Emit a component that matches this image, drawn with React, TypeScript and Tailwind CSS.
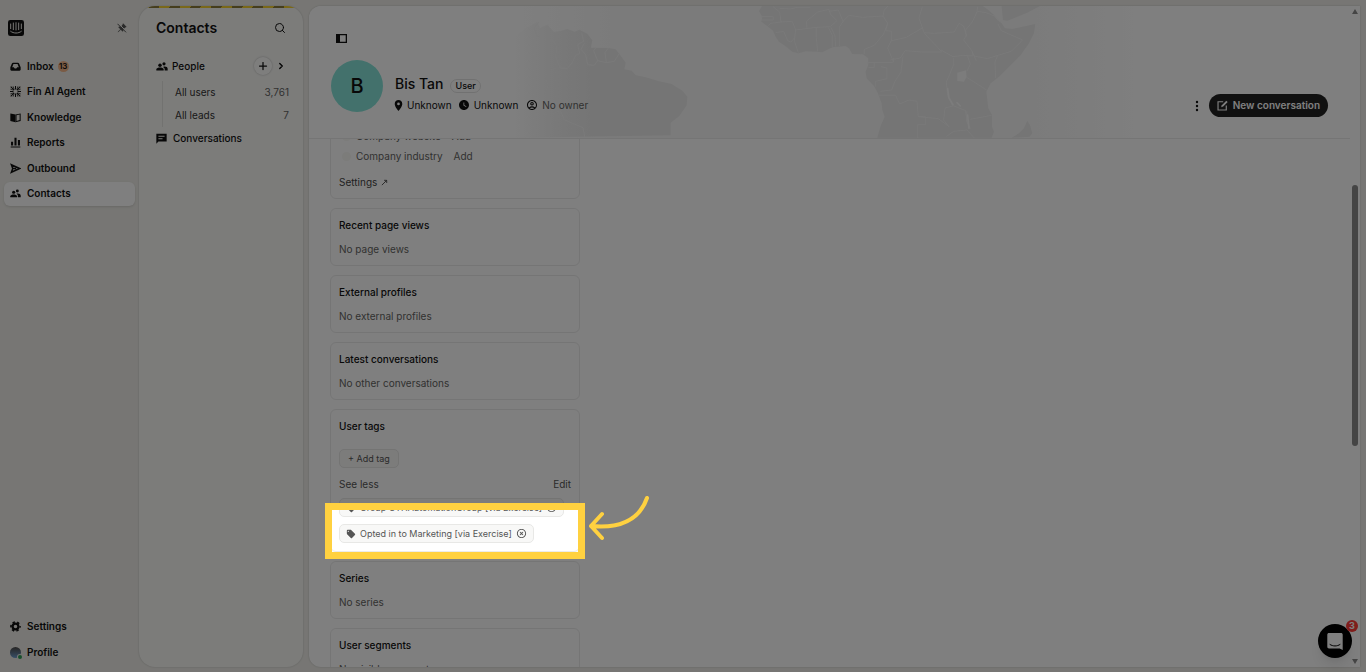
import React from 'react';
import { MdLocationOn, MdWatchLater, MdOutlineAccountCircle, MdLocalOffer, MdHighlightOff } from 'react-icons/md';
import { BsPinAngleFill } from 'react-icons/bs';
import { ChevronRight, Plus, Search } from 'lucide-react';

type IconProps = { className?: string };

function Logo() {
  return (
    <svg viewBox="0 0 48 48" className="w-4 h-4">
      <rect width="48" height="48" rx="7" fill="#111" />
      <g stroke="#eeede8" strokeWidth="3" strokeLinecap="round" fill="none">
        <path d="M8 12v14M16 9v20M24 8v22M32 9v20M40 12v14" />
        <path d="M8 34c9 7 23 7 32 0" />
      </g>
    </svg>
  );
}

function InboxIcon({ className }: IconProps) {
  return (
    <svg viewBox="0 0 16 16" className={className} fill="currentColor">
      <path fillRule="evenodd" d="M4.5 2.5h7c.8 0 1.4.4 1.700 1.100L15.500 9v3.500c0 .8-.7 1.500-1.500 1.500H2c-.8 0-1.500-.7-1.500-1.500V9l2.300-5.400c.3-.7.9-1.100 1.700-1.100zM5 4.500 3.200 9H5.700c.2 1.200 1.100 2 2.300 2s2.100-.8 2.300-2h2.500L11 4.500z" />
    </svg>
  );
}

function FinIcon({ className }: IconProps) {
  return (
    <svg viewBox="0 0 16 16" className={className} fill="none" stroke="currentColor" strokeWidth="1.500">
      <path d="M8 0v5M8 11v5M0 8h5M11 8h5" />
      <path d="M1 1l5 5M15 1l-5 5M1 15l5-5M15 15l-5-5" />
      <path d="M4.500 .5 6 5M11.500 .5 10 5M4.500 15.500 6 11M11.500 15.500 10 11M.5 4.500 5 6M.5 11.500 5 10M15.500 4.500 11 6M15.500 11.500 11 10" strokeWidth="1" />
    </svg>
  );
}

function BookIcon({ className }: IconProps) {
  return (
    <svg viewBox="0 0 16 16" className={className} fill="currentColor">
      <path d="M.5 2 8 3.500V15L.5 13z" />
      <path fillRule="evenodd" d="M8 3.500 15.500 2v11L8 15zM9.500 4.800v8.200l4.500-1.200V3.800z" />
    </svg>
  );
}

function ReportsIcon({ className }: IconProps) {
  return (
    <svg viewBox="0 0 16 16" className={className} fill="currentColor">
      <path d="M1.500 7h3v5.500h-3zM6.500 1h3v11.500h-3zM11.500 4.500h3v8h-3zM1 13.700h14v1.500H1z" />
    </svg>
  );
}

function OutboundIcon({ className }: IconProps) {
  return (
    <svg viewBox="0 0 16 16" className={className} fill="none" stroke="currentColor" strokeWidth="2.200" strokeLinejoin="miter">
      <path d="M2 2.500 14 8 2 13.500 4 8zM4 8h5" />
    </svg>
  );
}

function PeopleIcon({ className }: IconProps) {
  return (
    <svg viewBox="0 0 18 16" className={className} fill="currentColor">
      <circle cx="6" cy="6" r="2.600" />
      <path d="M.5 14v-1.500c0-2 3-3 5.500-3s5.500 1 5.500 3V14z" />
      <circle cx="12" cy="4" r="2.400" />
      <path d="M11.500 8.200c3-.7 6 .8 6 3V14H13v-1.800c0-1.700-.8-2.800-2.500-3.600z" />
    </svg>
  );
}

function ChatIcon({ className }: IconProps) {
  return (
    <svg viewBox="0 0 16 16" className={className} fill="currentColor">
      <path fillRule="evenodd" d="M.5 1h15v11.500H3.500L.5 15.500zM3.500 4v1.500h9V4zM3.500 7.500V9h6V7.500z" />
    </svg>
  );
}

function GearIcon({ className }: IconProps) {
  return (
    <svg viewBox="0 0 16 16" className={className} fill="none" stroke="currentColor">
      <circle cx="8" cy="8" r="4.200" strokeWidth="3.200" />
      <circle cx="8" cy="8" r="6.600" strokeWidth="2.400" strokeDasharray="3.460 3.450" strokeDashoffset="1.730" />
    </svg>
  );
}

function ComposeIcon({ className }: IconProps) {
  return (
    <svg viewBox="0 0 16 16" className={className} fill="none" stroke="currentColor" strokeWidth="1.700">
      <path d="M9 2.500H1.500v12h12V8" />
      <path d="M6 10.500 7 7.500 13.500 1l2 2L9 9.500z" fill="currentColor" stroke="none" />
    </svg>
  );
}

function WorldMap() {
  return (
    <svg viewBox="510 6 640 132" className="absolute left-[200px] top-0 w-[640px] h-[132px]">
      <defs>
        <linearGradient id="sea">
          <stop offset="0" stopColor="#f6f6f6" stopOpacity="0" />
          <stop offset="0.18" stopColor="#f6f6f6" />
          <stop offset="0.8" stopColor="#f6f6f6" />
          <stop offset="1" stopColor="#f6f6f6" stopOpacity="0" />
        </linearGradient>
        <linearGradient id="coast" gradientUnits="userSpaceOnUse" x1="620" x2="860" y1="0" y2="0">
          <stop offset="0" stopColor="#eaeaea" stopOpacity="0" />
          <stop offset="1" stopColor="#eaeaea" />
        </linearGradient>
      </defs>
      <rect x="510" y="6" width="640" height="132" fill="url(#sea)" />
      <g transform="translate(310 0) scale(0.3333)">
        <path fill="url(#coast)" d="M620 413V110l30-25 35-19 8 18 22-10 20 22 22-4 18-5 22 8 14-6 24 12 15 20-4 22 54 1 20 4 14 18 16 22-4 20 22 4 12 14 30 6 40 12 38 8 32 20 15 18-2 26-22 32-26 20v38z" />
        <g fill="none" stroke="#f5f5f5" strokeWidth="2.500">
          <path d="M690 66l-14 18 6 22 26 14 28 4 8 20-4 26 14 34 20 2 16-18 10-22 12-6-6-26 18-10-6-26" />
          <path d="M826 130l-10 18 14 16 6 30 20 2 10-14-12-30 8-10M866 182l26 6-4-30 10-14M892 188l24-4 14-22" />
          <path d="M740 205l-22 6-8 24 8 20-10 30M700 345l32-4 22-10 12 28 32 14 24 10 6 30M722 413l4-60" />
        </g>
      </g>
      <g transform="translate(700 0) scale(0.3333)">
        <g fill="#eaeaea">
          <path d="M190 17l-10 16 10 17-3 15 18 13 17 14 8 18 10 15 22 15 18 15 18 5 22-6 35 1 15 2 30-15 40-4 10 7 10 17 32 1 16 12v20l-8 20 3 20 22 23 12 22 11 30 2 20 7 20-12 28-10 35h343l7-18-6-15v-35l-11-20-3-25-3-25 13-25 25-20 30-30 35-35 25-35 15-30 4-28-24 5-45 10-22-2-10-15-13-10-10-15-17-15-18-13z" />
          <path d="M908 17l4 43 13 2 60-24 40-21zM938 413l22-13 15-15 10-22 8 12 7 25-8 10z" />
        </g>
        <g fill="none" stroke="#f4f4f4" strokeWidth="2.500" strokeLinejoin="round">
          <path d="M222 20l20 16 4 30 34-2 10 26 62-8 42-2 20-18-20-20-4-14-34 8-34 28 2 20M242 25l32 2 20-5h40M187 50h36v10h-36M246 66l-30 4-10 8" />
          <path d="M230 98l24-4 12 28 10 4 12-14M290 90l-4 32 12 36M352 82v30l4 42M388 82l12 24v36M396 82l12 26 2 32M434 62l-12 18v58M390 34l28-4 14 34 18-18 40 6 62-4 4-18 12-13" />
          <path d="M552 48l14 22-12 32-28 34-30 12v14M566 70l-6 22 18 2 0 26-12 24 18 42M578 122l44-10 48-28M670 20l-10 34 16 46 40 42 12 14-60 0-50-4-14 22-30 6" />
          <path d="M676 98l30 2 60-4 14-26 14 8 8 28-8 14 26 34 2 14-30-2-30 4-36-20M836 20l-2 14 28 4 24 10 16 16M834 36l-14 30-20 24 2 20M897 72l10 20 64 28-34 34-40 12-32 10-40-8" />
          <path d="M896 166l-8 20 2 48M820 155l12 28M806 168l8 24-10 22M764 174v20l-14 34-8 18 4 40 14 30 40 16 4 34M803 232l60 38M506 188h76l2-14M508 203h18v-14M546 200l18 4v32l-34 8v16M612 170l-6 46-18 28-10 26-34 4" />
          <path d="M540 286h50l12 26 28-12 24 4 4 46h22v24h-24v40M658 350l60 6 32 24-16-20 4-36 24-6M742 410l22-16 40-4 22 24M804 332v34l10 20M814 358l64-12" />
        </g>
        <path fill="#f8f8f8" d="M775 218l26-7 2 20-8 14-20-2z" />
        <path fill="none" stroke="#f8f8f8" strokeWidth="5" strokeLinecap="round" d="M746 266l4 28 12 20M774 308l10 10M806 345l4 40" />
      </g>
    </svg>
  );
}

const navItems = [
  { label: 'Inbox', icon: InboxIcon, badge: '13' },
  { label: 'Fin AI Agent', icon: FinIcon },
  { label: 'Knowledge', icon: BookIcon },
  { label: 'Reports', icon: ReportsIcon },
  { label: 'Outbound', icon: OutboundIcon },
  { label: 'Contacts', icon: PeopleIcon, active: true },
];

function Sidebar() {
  return (
    <aside className="w-[139px] shrink-0 flex flex-col px-1 pt-5 pb-2">
      <div className="flex items-center justify-between pl-1 pr-2 mb-[18px]">
        <Logo />
        <button aria-label="Unpin sidebar" className="relative text-[#555]">
          <BsPinAngleFill className="w-[10px] h-[10px]" />
          <svg viewBox="0 0 10 10" className="absolute inset-0 w-[10px] h-[10px]">
            <path d="M1.500 .5 10 9" stroke="#eeede8" />
            <path d="M.5 .8 9 9.300" stroke="currentColor" />
          </svg>
        </button>
      </div>
      <nav className="h-[152px] flex flex-col justify-between">
        {navItems.map(({ label, icon: Icon, badge, active }) => (
          <a
            key={label}
            href="#"
            className={`flex items-center h-6 px-[6px] gap-[6px] rounded-md font-semibold ${active ? 'bg-white shadow-sm' : ''}`}
          >
            <Icon className="w-[11px] h-[11px] shrink-0" />
            <span>{label}</span>
            {badge && <span className="-ml-[2px] w-[11px] h-[11px] rounded-full bg-[#f5b78a] text-[8px] leading-[11px] text-center">{badge}</span>}
          </a>
        ))}
      </nav>
      <div className="mt-auto flex flex-col gap-[2px] font-semibold">
        <a href="#" className="flex items-center h-6 px-[6px] gap-[6px]">
          <GearIcon className="w-[11px] h-[11px]" />
          Settings
        </a>
        <a href="#" className="flex items-center h-6 px-[6px] gap-[6px]">
          <span className="relative w-[11px] h-[11px] rounded-full bg-linear-to-b from-[#4d4a48] to-[#6f9fd0]">
            <span className="absolute -right-px -bottom-px w-1 h-1 rounded-full bg-[#2f9e58] ring-1 ring-[#eeede8]"></span>
          </span>
          Profile
        </a>
      </div>
    </aside>
  );
}

function ContactsPanel() {
  return (
    <section className="relative w-[164px] shrink-0 rounded-2xl bg-[#f8f8f5] shadow-[0_0_2px_rgba(0,0,0,0.2)] overflow-hidden pt-3 px-[17px]">
      <div className="absolute inset-x-0 top-0 h-[2px] bg-[repeating-linear-gradient(120deg,#f5d032_0_9px,#8a7a3a_9px_18px)]"></div>
      <div className="flex items-center justify-between">
        <h1 className="text-sm leading-5 font-semibold">Contacts</h1>
        <button aria-label="Search contacts">
          <Search className="w-3 h-3" />
        </button>
      </div>
      <div className="mt-[18px] flex items-center h-5 font-medium">
        <PeopleIcon className="w-3 h-[11px] mr-1" />
        <span>People</span>
        <button aria-label="Add people" className="ml-auto w-[18px] h-[18px] rounded-full bg-white/60 shadow-[0_0_2px_rgba(0,0,0,0.3)] flex items-center justify-center">
          <Plus className="w-3 h-3" strokeWidth={2.5} />
        </button>
        <ChevronRight className="w-[10px] h-[10px] ml-1" strokeWidth={3.5} />
      </div>
      <ul className="ml-[6px] mt-[5px] -mr-[3px] border-l border-[#e4e4e0] text-[#333]">
        <li className="flex justify-between h-[23px] items-center pl-3"><span>All users</span><span className="text-[#646462]">3,761</span></li>
        <li className="flex justify-between h-[23px] items-center pl-3"><span>All leads</span><span className="text-[#646462]">7</span></li>
      </ul>
      <a href="#" className="flex items-center h-[22px] gap-[6px] font-medium">
        <ChatIcon className="w-[11px] h-[11px]" />
        Conversations
      </a>
    </section>
  );
}

function ProfileHeader() {
  return (
    <header className="relative h-[133px] shrink-0 border-b border-[#ebebeb] bg-white overflow-hidden">
      <WorldMap />
      <div className="relative pl-[22px] pr-[22px] pt-[27px]">
        <button aria-label="Toggle panel" className="block ml-[5px]">
          <svg viewBox="0 0 11 11" className="w-[11px] h-[11px]">
            <path fill="#111" fillRule="evenodd" d="M0 1h11v9H0zM4 2.300v6.400h5.700V2.300z" />
          </svg>
        </button>
        <div className="flex items-start mt-4">
          <div className="w-[52px] h-[52px] rounded-full bg-[#86e3d8] flex items-center justify-center text-xl font-medium">B</div>
          <div className="ml-3 pt-[14px]">
            <div className="flex items-center gap-[7px]">
              <h2 className="text-sm leading-5 font-medium">Bis Tan</h2>
              <span className="mt-1 border border-[#e2e2e2] rounded-full px-1 text-[9px] leading-3 font-medium">User</span>
            </div>
            <div className="flex items-center mt-[3px] leading-4">
              <MdLocationOn className="w-[13px] h-[13px] -ml-[3px] mr-[2px]" />
              <span>Unknown</span>
              <MdWatchLater className="w-3 h-3 ml-[6px] mr-1" />
              <span>Unknown</span>
              <MdOutlineAccountCircle className="w-3 h-3 ml-2 mr-1" />
              <span className="text-[#646462]">No owner</span>
            </div>
          </div>
          <div className="ml-auto mt-[34px] flex items-center gap-2">
            <button aria-label="More actions">
              <svg viewBox="0 0 8 12" className="w-2 h-3" fill="#111">
                <circle cx="4" cy="2" r="1.200" />
                <circle cx="4" cy="6" r="1.200" />
                <circle cx="4" cy="10" r="1.200" />
              </svg>
            </button>
            <button className="h-[23px] rounded-full bg-[#222] text-white flex items-center gap-[5px] px-2 font-semibold">
              <ComposeIcon className="w-[11px] h-[11px]" />
              New conversation
            </button>
          </div>
        </div>
      </div>
    </header>
  );
}

function Card({ title, children }: { title: string; children: React.ReactNode }) {
  return (
    <section className="border border-[#ebebeb] rounded-md px-2 py-2">
      <h3 className="leading-4 font-medium mb-2 text-[#111]">{title}</h3>
      {children}
    </section>
  );
}

function Tag({ label }: { label: string }) {
  return (
    <span className="inline-flex items-center h-[19px] self-start px-[6px] rounded-[5px] border border-[#e8e8e6] bg-[#f8f8f7] text-[#555] text-[9px] whitespace-nowrap">
      <MdLocalOffer className="w-[10px] h-[10px] mr-1" />
      {label}
      <button aria-label={`Remove ${label}`}>
        <MdHighlightOff className="w-[11px] h-[11px] ml-1" />
      </button>
    </span>
  );
}

function Details() {
  return (
    <div className="w-[250px] ml-[21px] -mt-[18px] flex flex-col gap-[9px] text-[#646462] leading-4">
      <section className="border border-[#ebebeb] rounded-md px-2 pt-1 pb-2">
        {['website', 'industry'].map((field) => (
          <div key={field} className="flex items-center h-5 pl-[3px]">
            <span className="w-[9px] h-[9px] rounded-full bg-[#f8f8f5] mr-[5px]"></span>
            Company {field}
            <button className="ml-[11px]">Add</button>
          </div>
        ))}
        <a href="#" className="flex items-center mt-2 text-[#444]">
          Settings
          <svg viewBox="0 0 8 8" className="w-[7px] h-[7px] ml-1" fill="none" stroke="currentColor">
            <path d="M1 7 6.500 1.500M3.500 1.500h3V4.500" />
          </svg>
        </a>
      </section>
      <Card title="Recent page views"><p>No page views</p></Card>
      <Card title="External profiles"><p>No external profiles</p></Card>
      <Card title="Latest conversations"><p>No other conversations</p></Card>
      <Card title="User tags">
        <button className="mt-[15px] h-[19px] px-2 flex items-center rounded-[5px] border border-[#e8e8e6] bg-[#f8f8f7] text-[#555] text-[9px]">+ Add tag</button>
        <div className="flex justify-between mt-2 mb-[6px] text-[#555]">
          <button>See less</button>
          <button>Edit</button>
        </div>
        <div className="flex flex-col gap-[7px]">
          <Tag label="Group GTHAutomationGroup [via Exercise]" />
          <Tag label="Opted in to Marketing [via Exercise]" />
        </div>
      </Card>
      <Card title="Series"><p>No series</p></Card>
      <Card title="User segments"><p>No visible segments</p></Card>
    </div>
  );
}

function Scrollbar() {
  return (
    <div className="w-[10px] shrink-0 flex flex-col items-center py-[3px]">
      <svg viewBox="0 0 6 5" className="w-[6px] h-[5px]"><path fill="#8a8a8a" d="M3 0l3 5H0z" /></svg>
      <div className="flex-[170]"></div>
      <div className="flex-[261] w-[6px] rounded-full bg-[#8a8a8a]"></div>
      <div className="flex-[212]"></div>
      <svg viewBox="0 0 6 5" className="w-[6px] h-[5px]"><path fill="#8a8a8a" d="M3 5l3-5H0z" /></svg>
    </div>
  );
}

function Messenger() {
  return (
    <button aria-label="Open messenger" className="absolute right-[14px] bottom-[14px] w-[34px] h-[34px] rounded-full bg-black flex items-center justify-center shadow-lg">
      <svg viewBox="0 0 16 17" className="w-4 h-[17px]">
        <path fill="#fff" d="M2 0h12c1 0 1.700.7 1.700 1.700V17l-3-1.500H2c-1 0-1.700-.7-1.700-1.700V1.700C.3.700 1 0 2 0z" />
        <path fill="none" stroke="#000" strokeLinecap="round" d="M3 11.500c3 2 7 2 10 0" />
      </svg>
      <span className="absolute -right-[6px] -top-1 w-3 h-3 rounded-full bg-[#ff3b36] text-white text-[9px] leading-3 font-bold">3</span>
    </button>
  );
}

export default function App() {
  return (
    <div className="relative h-screen overflow-hidden flex bg-[#eeede8] text-[#111] text-[10px] font-['Inter',sans-serif]">
      <Sidebar />
      <div className="flex-1 min-w-0 flex gap-[6px] pt-[6px] pb-[5px] pr-[6px]">
        <ContactsPanel />
        <main className="flex-1 min-w-0 flex rounded-l-xl bg-white shadow-[0_0_2px_rgba(0,0,0,0.2)] overflow-hidden">
          <div className="flex-1 min-w-0 flex flex-col">
            <ProfileHeader />
            <div className="flex-1 min-h-0 overflow-hidden">
              <Details />
            </div>
          </div>
          <Scrollbar />
        </main>
      </div>
      <Messenger />

      {/* Spotlight: dims everything outside the box */}
      <div className="absolute left-[325px] top-[503px] w-[260px] h-14 border-[7px] border-[#ffd140] shadow-[0_0_0_2000px_rgba(0,0,0,0.5)] pointer-events-none"></div>
      <svg viewBox="0 0 66 50" className="absolute left-[586px] top-[493px] w-[66px] h-[50px] pointer-events-none" fill="none" stroke="#ffd140" strokeWidth="4" strokeLinecap="round" strokeLinejoin="round">
        <path d="M61 5C54 25 36 36 5 33M16 21 5 33l11 12" />
      </svg>
    </div>
  );
}
